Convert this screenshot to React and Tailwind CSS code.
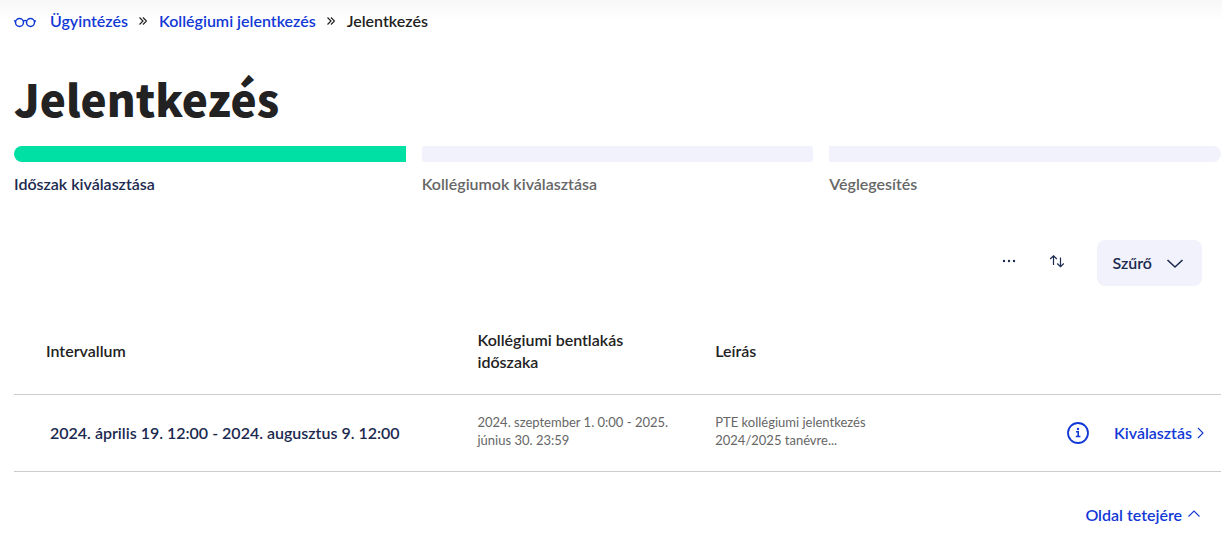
const STEPS = [
  { label: 'Időszak kiválasztása', active: true },
  { label: 'Kollégiumok kiválasztása', active: false },
  { label: 'Véglegesítés', active: false },
];

const PERIODS = [
  {
    id: 1,
    interval: '2024. április 19. 12:00 - 2024. augusztus 9. 12:00',
    stay: '2024. szeptember 1. 0:00 - 2025. június 30. 23:59',
    description: 'PTE kollégiumi jelentkezés 2024/2025 tanévre...',
  },
];

export default function App() {
  return (
    <div className="bg-white bg-linear-to-b from-[#f7f7f7] to-white to-[20px] pl-[14px] pr-px font-['Lato',sans-serif] text-base font-semibold text-[#222222]">
      <Breadcrumb />

      <h1 className="mt-[30px] font-['Noto_Sans_CJK_SC','Noto_Sans',sans-serif] text-[44px] leading-[72px] font-black">
        Jelentkezés
      </h1>

      <Stepper />

      {/* Toolbar */}
      <div className="mt-[45px] mr-[19px] flex items-center justify-end">
        <button type="button" aria-label="További műveletek" className="mr-6 p-1 text-[#1b2a4f]">
          <svg width="16" height="16" viewBox="0 0 16 16" fill="currentColor">
            <circle cx="3" cy="6" r="1.2" />
            <circle cx="8" cy="6" r="1.2" />
            <circle cx="13" cy="6" r="1.2" />
          </svg>
        </button>
        <button type="button" aria-label="Rendezés" className="mr-[28px] p-1 text-[#1b2a4f]">
          <svg width="16" height="16" viewBox="0 0 16 16" fill="none" stroke="currentColor" strokeWidth="1.2">
            <path d="M4.5 10V.8M1.2 4L4.5 .8L7.8 4" />
            <path d="M11.5 2.5V11.7M8.2 8.5L11.5 11.7L14.8 8.5" />
          </svg>
        </button>
        <button type="button" className="flex h-[46px] items-center gap-[14px] rounded-lg bg-[#f2f2fc] pr-[18px] pl-4 text-[#1b2a4f]">
          Szűrő
          <svg width="18" height="18" viewBox="0 0 18 18" fill="none" stroke="currentColor" strokeWidth="1.6">
            <path d="M1.5 6L9 13L16.5 6" />
          </svg>
        </button>
      </div>

      <PeriodTable />

      <div className="mt-[32px] mr-[21px] flex justify-end">
        <a href="#root" className="flex items-center gap-[6px] leading-[22px] text-[#1238d6]">
          Oldal tetejére
          <svg width="12" height="12" viewBox="0 0 12 12" fill="none" stroke="currentColor" strokeWidth="1.1">
            <path d="M.5 7.5L6 2L11.5 7.5" />
          </svg>
        </a>
      </div>
    </div>
  );
}

function Breadcrumb() {
  return (
    <nav className="flex items-center pt-[10px] leading-[22px] text-[#1238d6]">
      <svg width="22" height="14" viewBox="0 0 22 14" fill="none" stroke="currentColor" strokeWidth="1.5" className="mr-[14px]">
        <circle cx="5.5" cy="8.5" r="4" />
        <circle cx="16.5" cy="8.5" r="4" />
        <path d="M9.3 7Q11 5.8 12.7 7M0 7H2M20 7H22" />
      </svg>
      <a href="#ugyintezes">Ügyintézés</a>
      <Separator />
      <a href="#kollegiumi">Kollégiumi jelentkezés</a>
      <Separator />
      <span className="text-[#222222]">Jelentkezés</span>
    </nav>
  );
}

function Separator() {
  return (
    <svg width="8" height="8" viewBox="0 0 8 8" fill="none" stroke="#222222" strokeWidth="1.2" className="mr-3 ml-[11px]">
      <path d="M.5 .5L4 4L.5 7.5M4 .5L7.5 4L4 7.5" />
    </svg>
  );
}

function Stepper() {
  return (
    <ol className="mt-[12px] grid grid-cols-3 gap-4">
      {STEPS.map((step) => (
        <li key={step.label} className="group">
          <div
            className={`h-4 rounded-xs group-first:rounded-l-full group-last:rounded-r-full ${
              step.active ? 'bg-[#00e0a4]' : 'bg-[#f2f2fc]'
            }`}
          />
          <p className={`mt-[11px] leading-[22px] ${step.active ? 'text-[#1b2a4f]' : 'text-[#666666]'}`}>{step.label}</p>
        </li>
      ))}
    </ol>
  );
}

function PeriodTable() {
  return (
    <table className="mt-[23px] w-full table-fixed text-left">
      <thead>
        <tr className="h-[85px] border-b border-[#cccccc] leading-[22px]">
          <th className="w-[38.4%] pl-8 font-semibold">Intervallum</th>
          <th className="w-[19.7%] pr-10 font-semibold">Kollégiumi bentlakás időszaka</th>
          <th className="w-[15%] font-semibold">Leírás</th>
          <th aria-label="Műveletek" />
        </tr>
      </thead>
      <tbody>
        {PERIODS.map((period) => (
          <tr key={period.id} className="h-[77px] border-b border-[#cccccc]">
            <td className="pl-9 text-[#1b2a4f]">{period.interval}</td>
            <td className="pr-10 pb-1 text-[13px] leading-[18px] font-normal text-[#666666]">{period.stay}</td>
            <td className="pb-1 text-[13px] leading-[18px] font-normal text-[#666666]">{period.description}</td>
            <td>
              <div className="mr-[17px] flex items-center justify-end text-[#1238d6]">
                <button type="button" aria-label="Információ" className="mr-[24px]">
                  <svg width="24" height="24" viewBox="0 0 24 24" fill="none" stroke="currentColor" strokeWidth="1.8">
                    <circle cx="12" cy="12" r="10" />
                    <path d="M10 10.8H12.2V15.5M9.8 15.5H14.4" strokeWidth="1.6" />
                    <circle cx="12" cy="8" r="1.2" fill="currentColor" stroke="none" />
                  </svg>
                </button>
                <button type="button" className="flex items-center gap-[5px]">
                  Kiválasztás
                  <svg width="7" height="12" viewBox="0 0 7 12" fill="none" stroke="currentColor" strokeWidth="1.1">
                    <path d="M1 1L6 6L1 11" />
                  </svg>
                </button>
              </div>
            </td>
          </tr>
        ))}
      </tbody>
    </table>
  );
}
